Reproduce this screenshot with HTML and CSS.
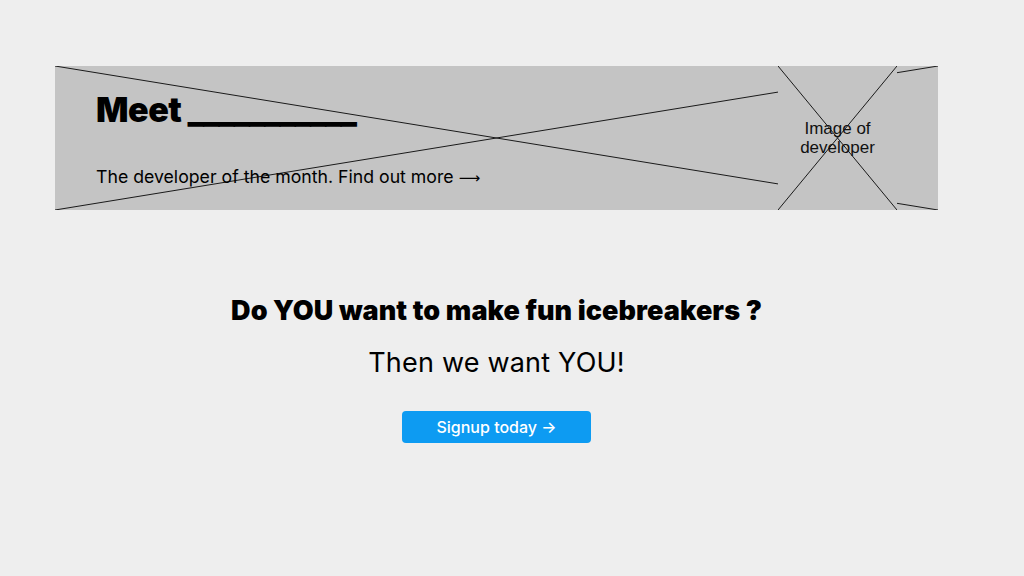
FILE: index.html
```html
<!DOCTYPE html>
<html lang="en">
<head>
<meta charset="utf-8">
<title>Icebreakers</title>
<link rel="stylesheet" href="styles.css">
</head>
<body>
<main class="page">
  <section class="banner">
    <svg class="banner-x" viewBox="0 0 883 144" preserveAspectRatio="none" aria-hidden="true">
      <line x1="0" y1="0" x2="883" y2="144"/>
      <line x1="0" y1="144" x2="883" y2="0"/>
    </svg>
    <div class="banner-text">
      <h1 class="meet">Meet <span class="blank">___________</span></h1>
      <p class="sub">The developer of the month. Find out more <span class="long-arrow">⟶</span></p>
    </div>
    <div class="dev-image">
      <svg class="dev-x" viewBox="0 0 119 144" preserveAspectRatio="none" aria-hidden="true">
        <line x1="0" y1="0" x2="119" y2="144"/>
        <line x1="0" y1="144" x2="119" y2="0"/>
      </svg>
      <span class="dev-label">Image of<br>developer</span>
    </div>
  </section>
  <section class="cta">
    <h2 class="cta-title">Do YOU want to make fun icebreakers ?</h2>
    <p class="cta-sub">Then we want YOU!</p>
    <button class="cta-btn">Signup today →</button>
  </section>
</main>
</body>
</html>
```
FILE: styles.css
```css
* { box-sizing: border-box; }
html, body {
  margin: 0;
  padding: 0;
  background: #eeeeee;
  font-family: Inter, "Noto Sans", sans-serif;
  color: #000;
}
.page {
  width: 883px;
  margin: 66px 0 0 55px;
}
.banner {
  position: relative;
  height: 144px;
  background: #c4c4c4;
  display: flex;
  justify-content: space-between;
}
.banner-x {
  position: absolute;
  inset: 0;
  width: 100%;
  height: 100%;
}
.banner-x line, .dev-x line {
  stroke: #1a1a1a;
  stroke-width: 1;
  vector-effect: non-scaling-stroke;
}
.banner-text {
  position: relative;
  padding: 23px 0 0 41px;
}
.meet {
  margin: 0;
  font-size: 34px;
  font-weight: 900;
  letter-spacing: -0.5px;
  line-height: 41px;
}
.blank {
  letter-spacing: -1.5px;
}
.sub {
  margin: 36px 0 0;
  font-size: 17.7px;
  line-height: 22px;
  font-weight: 400;
}
.long-arrow {
  font-family: "DejaVu Sans", sans-serif;
  font-size: 15px;
}
.dev-image {
  position: relative;
  width: 119px;
  height: 144px;
  margin-right: 41px;
  background: #c4c4c4;
  display: flex;
  align-items: center;
  justify-content: center;
}
.dev-x {
  position: absolute;
  inset: 0;
  width: 100%;
  height: 100%;
}
.dev-label {
  position: relative;
  font-family: "Liberation Sans", Arial, sans-serif;
  font-size: 17px;
  line-height: 19px;
  text-align: center;
  color: #111;
}
.cta {
  display: flex;
  flex-direction: column;
  align-items: center;
  padding-top: 85px;
}
.cta-title {
  margin: 0;
  font-size: 27px;
  line-height: 32px;
  font-weight: 900;
  letter-spacing: 0.1px;
}
.cta-sub {
  margin: 20px 0 0;
  font-size: 27px;
  line-height: 32px;
  font-weight: 400;
  letter-spacing: 0.2px;
}
.cta-btn {
  margin-top: 32px;
  width: 189px;
  height: 32px;
  border: 0;
  border-radius: 4px;
  background: #0d9bf2;
  color: #fff;
  font-family: Inter, "Noto Sans", sans-serif;
  font-size: 16px;
  font-weight: 500;
}
```
